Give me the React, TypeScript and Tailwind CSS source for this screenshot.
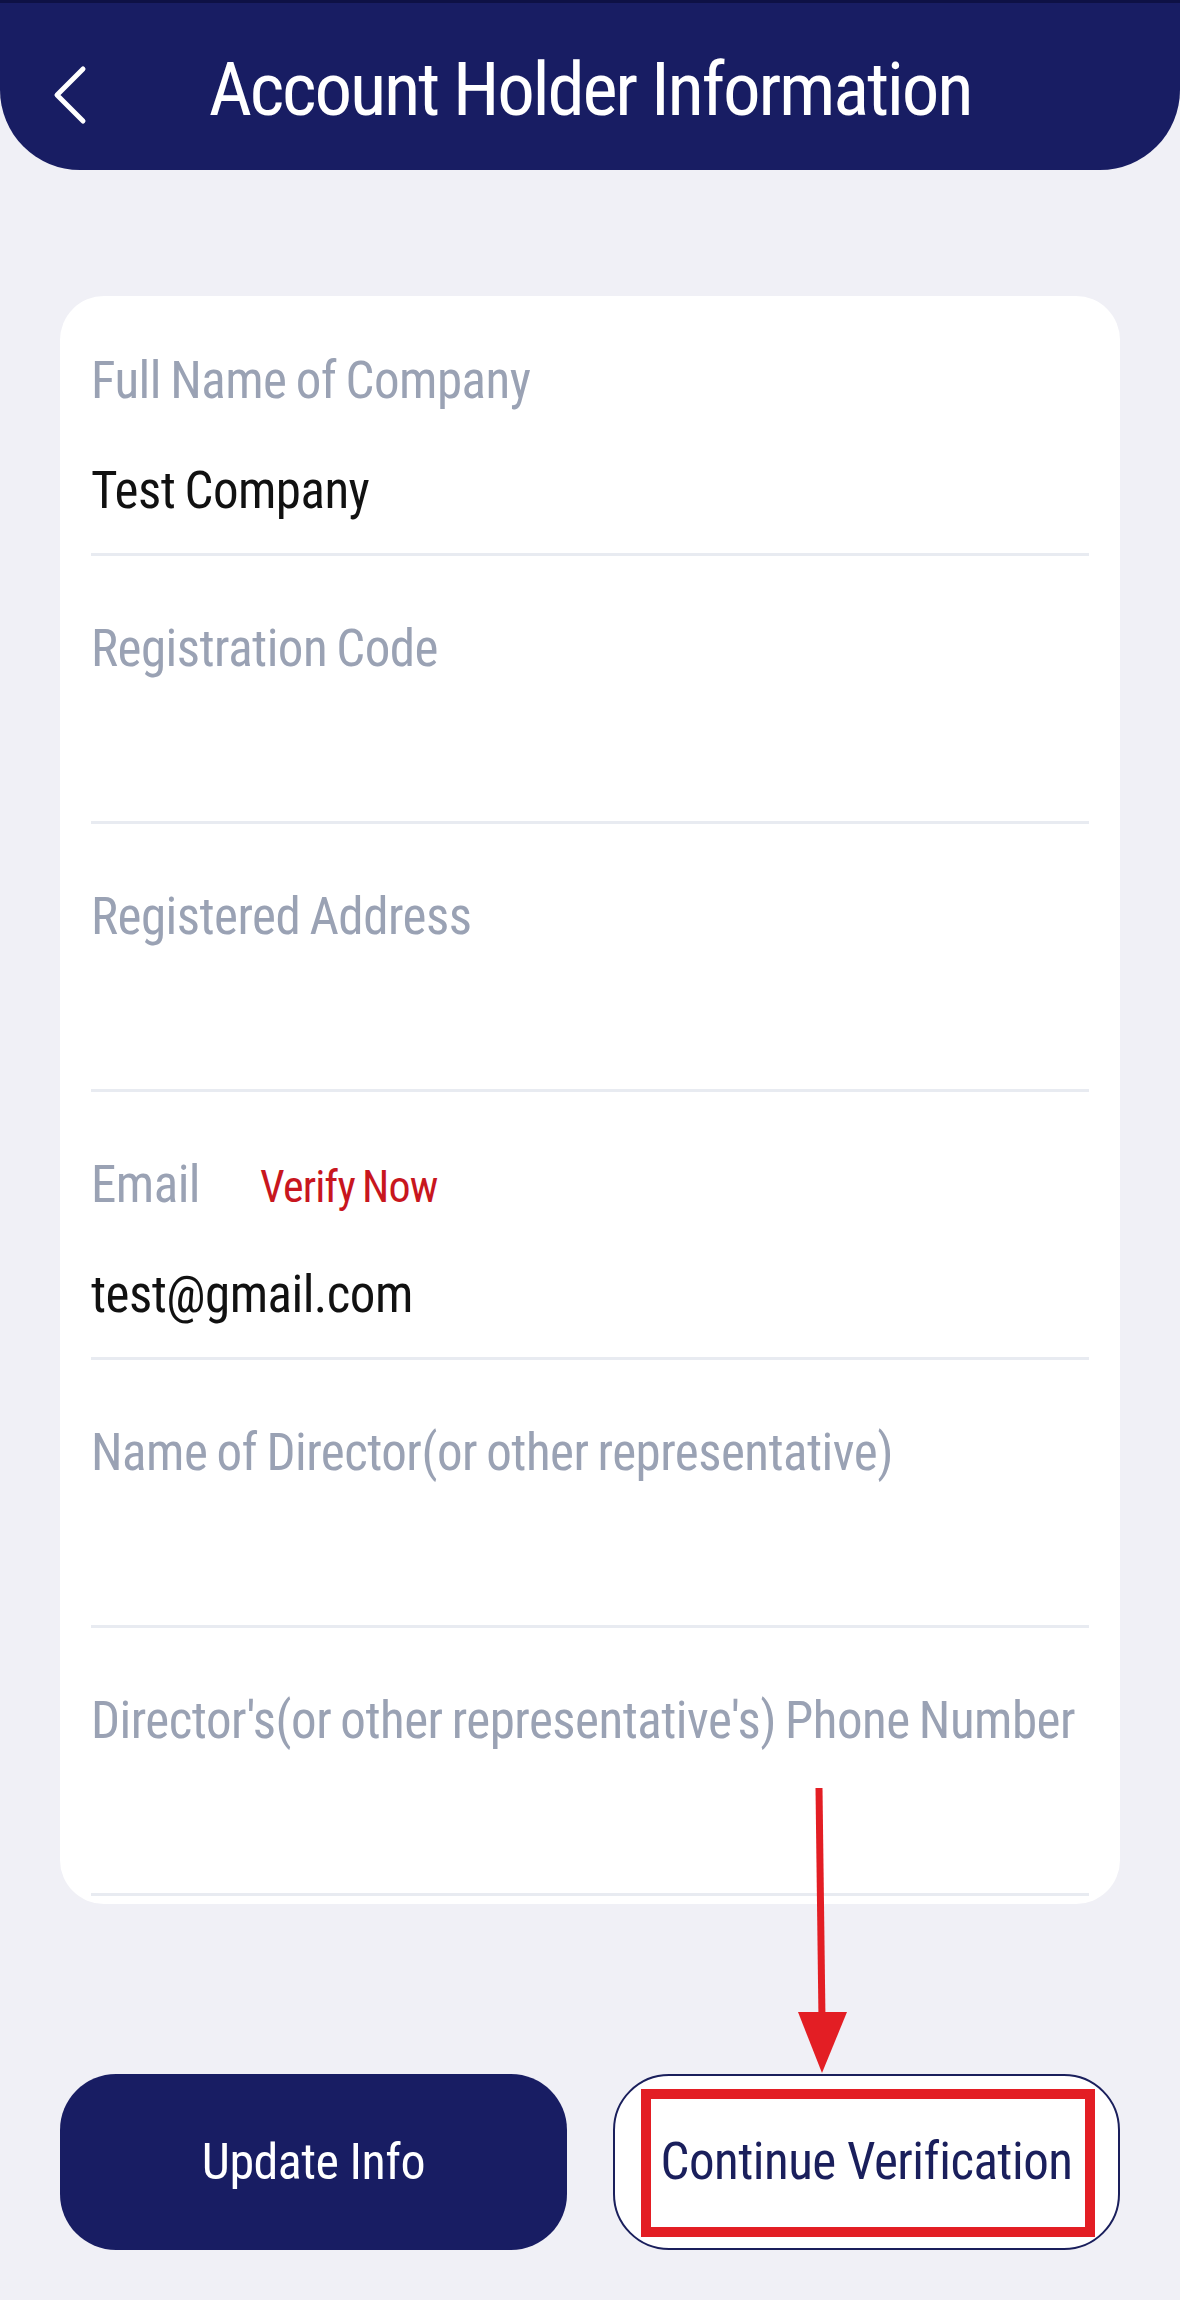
import React from "react"

const fields: { label: string; value?: string; verify?: boolean }[] = [
  { label: "Full Name of Company", value: "Test Company" },
  { label: "Registration Code" },
  { label: "Registered Address" },
  { label: "Email", value: "test@gmail.com", verify: true },
  { label: "Name of Director(or other representative)" },
  { label: "Director's(or other representative's) Phone Number" },
]

function Field({ label, value, verify, first }: { label: string; value?: string; verify?: boolean; first: boolean }) {
  return (
    <div className={`${first ? "pt-[53px]" : "pt-[61px]"} pb-[30px] border-b-[3px] border-[#e8ebf1]`}>
      <div className="flex items-baseline h-[64px] leading-[64px] text-[51px] text-[#9aa2b4] whitespace-nowrap tracking-[-0.01em] [word-spacing:-2px]">
        <span>{label}</span>
        {verify && <span className="ml-[60px] text-[44px] text-[#c8161e] tracking-[-0.02em]">Verify Now</span>}
      </div>
      <div className="mt-[46px] h-[64px] leading-[64px] text-[51px] text-[#111111] tracking-[-0.01em] [word-spacing:-2px]">{value}</div>
    </div>
  )
}

export default function App() {
  return (
    <div className="relative w-full min-h-[2300px] bg-[#f0f0f6] font-['Liberation_Sans_Narrow','Roboto_Condensed','Liberation_Sans',sans-serif]">
      {/* header */}
      <div className="relative h-[170px] bg-[#181d63] rounded-b-[80px] border-t-[3px] border-[#0e1145] flex items-center justify-center pt-[6px]">
        <svg className="absolute left-[50px] top-[62px]" width="40" height="60" viewBox="0 0 40 60">
          <polyline points="33,4 7,30 33,56" fill="none" stroke="white" strokeWidth="5" strokeLinecap="round" strokeLinejoin="round" />
        </svg>
        <h1 className="text-white text-[75px] leading-none tracking-[-0.03em]">Account Holder Information</h1>
      </div>

      <div className="px-[60px] pt-[126px]">
        <div className="bg-white rounded-[44px] px-[31px] pb-[8px]">
          {fields.map((f, i) => (
            <Field key={f.label} {...f} first={i === 0} />
          ))}
        </div>

        <div className="mt-[170px] flex gap-[46px]">
          <button className="w-[507px] h-[176px] rounded-[56px] bg-[#181d63] text-white text-[50px] tracking-[-0.01em] flex items-center justify-center">
            Update Info
          </button>
          <button className="relative w-[507px] h-[176px] rounded-[56px] bg-white border-2 border-[#1a1f5c] text-[#1a1f5c] text-[51px] tracking-[-0.01em] flex items-center justify-center">
            Continue Verification
            {/* annotation box */}
            <span className="absolute left-[26px] top-[13px] right-[23px] bottom-[11px] border-[10px] border-[#e31e24]" />
          </button>
        </div>
      </div>

      {/* annotation arrow */}
      <svg className="absolute left-[795px] top-[1785px]" width="56" height="292" viewBox="0 0 56 292">
        <line x1="24" y1="3" x2="27" y2="235" stroke="#e31e24" strokeWidth="7" />
        <polygon points="3,227 52,227 27,288" fill="#e31e24" />
      </svg>
    </div>
  )
}
